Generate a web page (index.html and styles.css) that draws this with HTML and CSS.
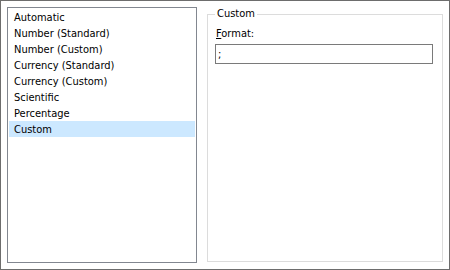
FILE: index.html
```html
<!DOCTYPE html>
<html lang="en">
<head>
    <meta charset="UTF-8">
    <title>Format Cells</title>
    <link rel="stylesheet" href="styles.css">
</head>
<body>
    <div class="dialog">
        <ul class="list">
            <li>Automatic</li>
            <li>Number (Standard)</li>
            <li>Number (Custom)</li>
            <li>Currency (Standard)</li>
            <li>Currency (Custom)</li>
            <li>Scientific</li>
            <li>Percentage</li>
            <li class="selected">Custom</li>
        </ul>
        <fieldset class="group">
            <legend>Custom</legend>
            <label class="label" for="fmt"><u>F</u>ormat:</label>
            <input class="field" id="fmt" type="text" value=";">
        </fieldset>
    </div>
</body>
</html>
```

FILE: styles.css
```css
body { margin: 0; font-family: 'DejaVu Sans Condensed', 'DejaVu Sans', sans-serif; font-size: 11px; color: #000; background: #fff; }
.dialog { width: 450px; height: 270px; box-sizing: border-box; border: 1px solid #6d6d6d; padding: 6px 6px 6px 6px; display: flex; gap: 10px; }
.list { list-style: none; margin: 0; padding: 1px; width: 190px; height: 256px; box-sizing: border-box; border: 1px solid #828790; flex-shrink: 0; }
.list li { height: 15px; line-height: 16px; padding: 1px 5px 0 5px; white-space: nowrap; }
.list li.selected { background: #cce8ff; }
.group { flex: 1; margin: 0 0 1px 0; padding: 4px 9px 0 7px; border: 1px solid #dcdcdc; min-width: 0; }
.group legend { padding: 0 2px; line-height: 14px; }
.label { display: block; padding-left: 1px; line-height: 14px; margin-top: 2px; }
.label u { text-decoration: underline; }
.field { display: block; width: 100%; height: 20px; box-sizing: border-box; margin: 3px 0 0 0; padding: 0 2px; border: 1px solid #7a7a7a; font: inherit; color: #000; outline: none; }
```
